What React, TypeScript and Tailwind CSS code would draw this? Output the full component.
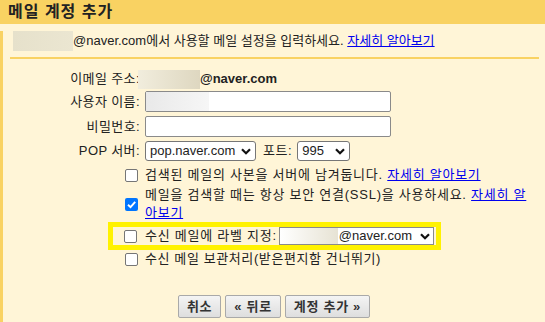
import React from "react";

const Chevron = () => (
  <svg width="10" height="7" viewBox="0 0 10 7" className="shrink-0">
    <path d="M1 1.2 L5 5.2 L9 1.2" fill="none" stroke="#111" strokeWidth="2.2" />
  </svg>
);

function Checkbox({ checked = false }: { checked?: boolean }) {
  if (checked) {
    return (
      <div className="w-[13px] h-[13px] rounded-[2px] bg-[#0075ff] flex items-center justify-center shrink-0">
        <svg width="11" height="11" viewBox="0 0 11 11">
          <path d="M2 5.8 L4.5 8.2 L9.2 2.8" fill="none" stroke="#fff" strokeWidth="1.9" />
        </svg>
      </div>
    );
  }
  return <div className="w-[13px] h-[13px] rounded-[2px] border border-[#767676] bg-white shrink-0" />;
}

function Select({ children, className }: { children: React.ReactNode; className: string }) {
  return (
    <div
      className={
        "flex items-center justify-between bg-white border border-[#767676] rounded-[3px] pl-[4px] pr-[4px] " +
        className
      }
    >
      <span className="whitespace-nowrap">{children}</span>
      <Chevron />
    </div>
  );
}

function FieldRow({ label, children, className = "" }: { label: string; children: React.ReactNode; className?: string }) {
  return (
    <div className={"flex items-center " + className}>
      <div className="w-[137px] shrink-0 text-right whitespace-nowrap tracking-[0.4px]">{label}</div>
      <div className="ml-[5px] flex items-center">{children}</div>
    </div>
  );
}

const Link = ({ children }: { children: React.ReactNode }) => (
  <a href="#" className="text-[#0000ee] underline">
    {children}
  </a>
);

export default function App() {
  return (
    <div className="w-[545px] h-[322px] overflow-hidden bg-[#fff5d7] text-[13px] text-[#222] font-['Liberation_Sans','Noto_Sans_CJK_KR',sans-serif]">
      <div className="h-[24px] bg-[#f9d262] pl-[8px] text-[16px] font-bold leading-[24px] tracking-[1px] text-[#222]">
        메일 계정 추가
      </div>
      <div className="h-[298px] border-l-[3px] border-[#f9d262]">
        <div className="flex items-center mt-[7px] ml-[10px] h-[20px] whitespace-nowrap">
          <span className="w-[60px] h-[20px] bg-linear-to-r from-[#e6e1cb] to-[#ebe6d1]" />
          <span>@naver.com에서 사용할 메일 설정을 입력하세요.&nbsp;</span>
          <Link>자세히 알아보기</Link>
        </div>
        <div className="ml-[7px] mt-[6px] h-[2px] w-[529px] bg-[#f9d262]" />

        <FieldRow label="이메일 주소:" className="mt-[10px] h-[20px]">
          <span className="-ml-[7px] w-[62px] h-[19px] bg-linear-to-r from-[#f1eddd] to-[#ded7c0]" />
          <span className="font-bold">@naver.com</span>
        </FieldRow>

        <FieldRow label="사용자 이름:" className="mt-[2px]">
          <div className="relative w-[246px] h-[21px] bg-white border border-[#8a8a8a] rounded-[2px]">
            <div className="absolute left-0 top-0 w-[63px] h-full bg-linear-to-r from-[#e9e9e9] to-[#f6f6f6]" />
          </div>
        </FieldRow>

        <FieldRow label="비밀번호:" className="mt-[4px]">
          <input type="password" className="w-[246px] h-[21px] bg-white border border-[#8a8a8a] rounded-[2px] outline-none" />
        </FieldRow>

        <FieldRow label="POP 서버:" className="mt-[4px]">
          <Select className="w-[111px] h-[20px]">pop.naver.com</Select>
          <span className="ml-[7px] tracking-[0.6px]">포트:</span>
          <Select className="ml-[5px] w-[53px] h-[20px]">995</Select>
        </FieldRow>

        <div className="flex items-center pl-[122px] mt-[5px] h-[18px] tracking-[0.75px]">
          <Checkbox />
          <span className="ml-[7px] whitespace-nowrap">
            검색된 메일의 사본을 서버에 남겨둡니다. <Link>자세히 알아보기</Link>
          </span>
        </div>

        <div className="flex items-center pl-[122px] mt-[2px] h-[36px] tracking-[0.75px]">
          <Checkbox checked />
          <span className="ml-[7px] leading-[18px] whitespace-nowrap">
            메일을 검색할 때는 항상 보안 연결(SSL)을 사용하세요.{" "}
            <Link>
              자세히 알
              <br />
              아보기
            </Link>
          </span>
        </div>

        <div className="ml-[105px] w-[333px] h-[28px] border-[5px] border-[#fff200] flex items-center pl-[11px]">
          <Checkbox />
          <span className="ml-[8px] whitespace-nowrap tracking-[0.75px]">수신 메일에 라벨 지정:</span>
          <div className="ml-[2px] w-[155px] h-[18px] bg-white border border-[#8a8a8a] flex items-center pr-[3px]">
            <span className="w-[58px] h-full bg-linear-to-r from-[#ffffff] to-[#e7e3d4]" />
            <span className="ml-[1px] whitespace-nowrap">@naver.com</span>
            <span className="ml-auto">
              <Chevron />
            </span>
          </div>
        </div>

        <div className="flex items-center pl-[122px] h-[18px] tracking-[0.6px]">
          <Checkbox />
          <span className="ml-[7px] whitespace-nowrap">수신 메일 보관처리(받은편지함 건너뛰기)</span>
        </div>

        <div className="mt-[27px] flex justify-center gap-[4px]">
          {["취소", "« 뒤로", "계정 추가 »"].map((t) => (
            <button
              key={t}
              className="h-[23px] px-[8px] border border-[#a9a9a9] rounded-[2px] bg-linear-to-b from-[#f4f4f4] to-[#dedede] font-bold text-[#333] whitespace-nowrap tracking-[0.7px]"
            >
              {t}
            </button>
          ))}
        </div>
      </div>
    </div>
  );
}
